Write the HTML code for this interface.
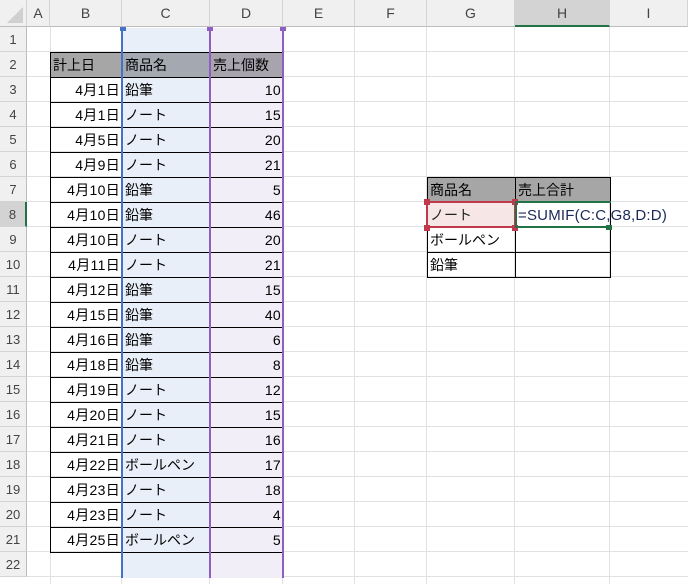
<!DOCTYPE html>
<html><head><meta charset="utf-8"><style>
*{box-sizing:border-box;margin:0;padding:0}
body{width:688px;height:584px;overflow:hidden;background:#fff;position:relative;font-family:"Liberation Sans","Noto Sans CJK JP",sans-serif;font-size:14px;color:#000}
.a{position:absolute}
.hdr{background:#f0f0f0}
.cl{position:absolute;top:0;height:27px;line-height:27px;text-align:center;color:#444;font-size:14px;border-right:1px solid #d4d4d4;border-bottom:1px solid #bdbdbd}
.rn{position:absolute;left:0;width:27px;height:25px;line-height:25px;text-align:center;color:#444;font-size:13px;background:#f0f0f0;border-bottom:1px solid #d4d4d4;border-right:1px solid #bdbdbd}
table{position:absolute;border-collapse:collapse;table-layout:fixed}
td{border:1px solid #000;height:25px;padding:0 2px;white-space:nowrap;overflow:visible;line-height:23px}
td.r{text-align:right;letter-spacing:0.3px}
tr.h td{background:#a6a6a6}
.c{background:#e9eff8}
.d{background:#f1eef7}
tr.h td.c{background:#a3a8b1}
tr.h td.d{background:#a8a4ae}
</style></head><body>
<div class="a" style="left:0;top:27px;width:688px;height:557px;background:repeating-linear-gradient(to bottom,transparent 0,transparent 24px,#e1e1e1 24px,#e1e1e1 25px)"></div>
<div class="a" style="left:50px;top:27px;width:1px;height:557px;background:#e1e1e1"></div>
<div class="a" style="left:121px;top:27px;width:1px;height:557px;background:#e1e1e1"></div>
<div class="a" style="left:209px;top:27px;width:1px;height:557px;background:#e1e1e1"></div>
<div class="a" style="left:282px;top:27px;width:1px;height:557px;background:#e1e1e1"></div>
<div class="a" style="left:354px;top:27px;width:1px;height:557px;background:#e1e1e1"></div>
<div class="a" style="left:426px;top:27px;width:1px;height:557px;background:#e1e1e1"></div>
<div class="a" style="left:514px;top:27px;width:1px;height:557px;background:#e1e1e1"></div>
<div class="a" style="left:609px;top:27px;width:1px;height:557px;background:#e1e1e1"></div>
<div class="a c" style="left:122px;top:28px;width:88px;height:550px"></div>
<div class="a d" style="left:210px;top:28px;width:73px;height:550px"></div>
<div class="cl hdr" style="left:0;width:27px;background:#f0f0f0"><svg width="20" height="20" style="position:absolute;left:5px;top:5px"><polygon points="18,2 18,18 2,18" fill="#d0d0d0"/></svg></div>
<div class="cl hdr" style="left:27px;width:23px">A</div>
<div class="cl hdr" style="left:50px;width:72px">B</div>
<div class="cl hdr" style="left:122px;width:88px">C</div>
<div class="cl hdr" style="left:210px;width:73px">D</div>
<div class="cl hdr" style="left:283px;width:72px">E</div>
<div class="cl hdr" style="left:355px;width:72px">F</div>
<div class="cl hdr" style="left:427px;width:88px">G</div>
<div class="cl" style="left:515px;width:95px;background:#d3d3d3;border-bottom:2px solid #217346">H</div>
<div class="cl hdr" style="left:610px;width:78px">I</div>
<div class="rn" style="top:27px">1</div><div class="rn" style="top:52px">2</div><div class="rn" style="top:77px">3</div><div class="rn" style="top:102px">4</div><div class="rn" style="top:127px">5</div><div class="rn" style="top:152px">6</div><div class="rn" style="top:177px">7</div><div class="rn" style="top:202px;background:#d3d3d3;border-right:2px solid #217346">8</div><div class="rn" style="top:227px">9</div><div class="rn" style="top:252px">10</div><div class="rn" style="top:277px">11</div><div class="rn" style="top:302px">12</div><div class="rn" style="top:327px">13</div><div class="rn" style="top:352px">14</div><div class="rn" style="top:377px">15</div><div class="rn" style="top:402px">16</div><div class="rn" style="top:427px">17</div><div class="rn" style="top:452px">18</div><div class="rn" style="top:477px">19</div><div class="rn" style="top:502px">20</div><div class="rn" style="top:527px">21</div><div class="rn" style="top:552px">22</div>
<table style="left:50px;top:52px;width:233px">
<colgroup><col style="width:72px"><col style="width:88px"><col style="width:73px"></colgroup>
<tr class="h"><td>計上日</td><td class="c">商品名</td><td class="d">売上個数</td></tr>
<tr><td class="r">4月1日</td><td class="c">鉛筆</td><td class="r d">10</td></tr>
<tr><td class="r">4月1日</td><td class="c">ノート</td><td class="r d">15</td></tr>
<tr><td class="r">4月5日</td><td class="c">ノート</td><td class="r d">20</td></tr>
<tr><td class="r">4月9日</td><td class="c">ノート</td><td class="r d">21</td></tr>
<tr><td class="r">4月10日</td><td class="c">鉛筆</td><td class="r d">5</td></tr>
<tr><td class="r">4月10日</td><td class="c">鉛筆</td><td class="r d">46</td></tr>
<tr><td class="r">4月10日</td><td class="c">ノート</td><td class="r d">20</td></tr>
<tr><td class="r">4月11日</td><td class="c">ノート</td><td class="r d">21</td></tr>
<tr><td class="r">4月12日</td><td class="c">鉛筆</td><td class="r d">15</td></tr>
<tr><td class="r">4月15日</td><td class="c">鉛筆</td><td class="r d">40</td></tr>
<tr><td class="r">4月16日</td><td class="c">鉛筆</td><td class="r d">6</td></tr>
<tr><td class="r">4月18日</td><td class="c">鉛筆</td><td class="r d">8</td></tr>
<tr><td class="r">4月19日</td><td class="c">ノート</td><td class="r d">12</td></tr>
<tr><td class="r">4月20日</td><td class="c">ノート</td><td class="r d">15</td></tr>
<tr><td class="r">4月21日</td><td class="c">ノート</td><td class="r d">16</td></tr>
<tr><td class="r">4月22日</td><td class="c">ボールペン</td><td class="r d">17</td></tr>
<tr><td class="r">4月23日</td><td class="c">ノート</td><td class="r d">18</td></tr>
<tr><td class="r">4月23日</td><td class="c">ノート</td><td class="r d">4</td></tr>
<tr><td class="r">4月25日</td><td class="c">ボールペン</td><td class="r d">5</td></tr>
</table>
<div class="a" style="left:121px;top:28px;width:2px;height:550px;background:#4472c4"></div>
<div class="a" style="left:120px;top:27px;width:6px;height:4px;background:#4472c4"></div>
<div class="a" style="left:209px;top:28px;width:2px;height:550px;background:#8e5fc0"></div>
<div class="a" style="left:282px;top:28px;width:2px;height:550px;background:#8e5fc0"></div>
<div class="a" style="left:207px;top:27px;width:6px;height:4px;background:#8e5fc0"></div>
<div class="a" style="left:280px;top:27px;width:6px;height:4px;background:#8e5fc0"></div>
<table style="left:427px;top:177px;width:183px">
<colgroup><col style="width:88px"><col style="width:95px"></colgroup>
<tr class="h"><td>商品名</td><td>売上合計</td></tr>
<tr><td style="background:#f7e6e6;color:#222">ノート</td><td style="color:#1c2a5a;overflow:visible;font-size:15px;letter-spacing:0.2px">=SUMIF(C:C,G8,D:D)</td></tr>
<tr><td>ボールペン</td><td></td></tr>
<tr><td>鉛筆</td><td></td></tr>
</table>
<div class="a" style="left:426px;top:201px;width:90px;height:27px;border:2px solid #c0394a"></div>
<div class="a" style="left:424px;top:199px;width:6px;height:6px;background:#c0394a"></div>
<div class="a" style="left:512px;top:199px;width:6px;height:6px;background:#c0394a"></div>
<div class="a" style="left:424px;top:225px;width:6px;height:6px;background:#c0394a"></div>
<div class="a" style="left:512px;top:225px;width:6px;height:6px;background:#c0394a"></div>
<div class="a" style="left:515px;top:201px;width:2px;height:27px;background:#217346"></div>
<div class="a" style="left:517px;top:201px;width:94px;height:2px;background:#217346"></div>
<div class="a" style="left:517px;top:226px;width:94px;height:2px;background:#217346"></div>
<div class="a" style="left:606px;top:225px;width:6px;height:5px;background:#217346"></div>
</body></html>
